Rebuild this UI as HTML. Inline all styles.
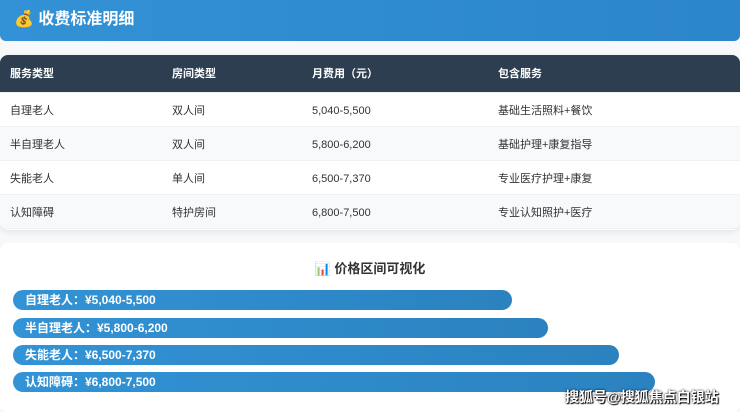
<!DOCTYPE html>
<html><head><meta charset="utf-8"><style>
*{margin:0;padding:0;box-sizing:border-box}
body{width:740px;height:412px;overflow:hidden;background:#f7f8fa;font-family:"Liberation Sans","Noto Sans CJK SC",sans-serif;position:relative}
.hd{position:absolute;left:0;top:0;width:740px;height:41px;background:linear-gradient(90deg,#3391d6,#2c86c9);border-radius:0 0 6px 6px;color:#fff;font-weight:bold;font-size:16px;line-height:40px;padding-left:14px}
.tb{position:absolute;left:0;top:55px;width:740px;height:175px;background:#fff;border-radius:8px;overflow:hidden;box-shadow:0 2px 6px rgba(0,0,0,.08)}
.row{position:relative;height:34px;font-size:11px;color:#333;line-height:36px;border-bottom:1px solid #eef0f3}
.row span{position:absolute}
.h{background:#2c3e50;color:#fff;font-weight:bold;height:38px;line-height:38px}
.alt{background:#f7f9fb}
.c1{left:10px}.c2{left:172px}.c3{left:312px}.c4{left:498px}
.vz{position:absolute;left:0;top:243px;width:740px;height:169px;background:#fff;border-radius:8px}
.t{position:absolute;top:15px;left:0;width:740px;text-align:center;font-weight:bold;font-size:13px;color:#333}
.bar{position:absolute;left:13px;height:20px;border-radius:10px;background:linear-gradient(90deg,#3293d6,#2b82bf);color:#fff;font-weight:bold;font-size:12px;line-height:20px;padding-left:12px}
.wm{position:absolute;left:565px;top:387px;color:#fff;font-size:14px;font-weight:bold;text-shadow:0 0 2px #000,1px 1px 1px #000}
</style></head><body>
<div class="hd">💰 收费标准明细</div>
<div class="tb">
<div class="row h"><span class="c1">服务类型</span><span class="c2">房间类型</span><span class="c3">月费用（元）</span><span class="c4">包含服务</span></div>
<div class="row"><span class="c1">自理老人</span><span class="c2">双人间</span><span class="c3">5,040-5,500</span><span class="c4">基础生活照料+餐饮</span></div>
<div class="row alt"><span class="c1">半自理老人</span><span class="c2">双人间</span><span class="c3">5,800-6,200</span><span class="c4">基础护理+康复指导</span></div>
<div class="row"><span class="c1">失能老人</span><span class="c2">单人间</span><span class="c3">6,500-7,370</span><span class="c4">专业医疗护理+康复</span></div>
<div class="row alt"><span class="c1">认知障碍</span><span class="c2">特护房间</span><span class="c3">6,800-7,500</span><span class="c4">专业认知照护+医疗</span></div>
</div>
<div class="vz">
<div class="t">📊 价格区间可视化</div>
<div class="bar" style="top:47px;width:499px">自理老人：¥5,040-5,500</div>
<div class="bar" style="top:75px;width:535px">半自理老人：¥5,800-6,200</div>
<div class="bar" style="top:102px;width:606px">失能老人：¥6,500-7,370</div>
<div class="bar" style="top:129px;width:642px">认知障碍：¥6,800-7,500</div>
</div>
<div class="wm">搜狐号@搜狐焦点白银站</div>
</body></html>
